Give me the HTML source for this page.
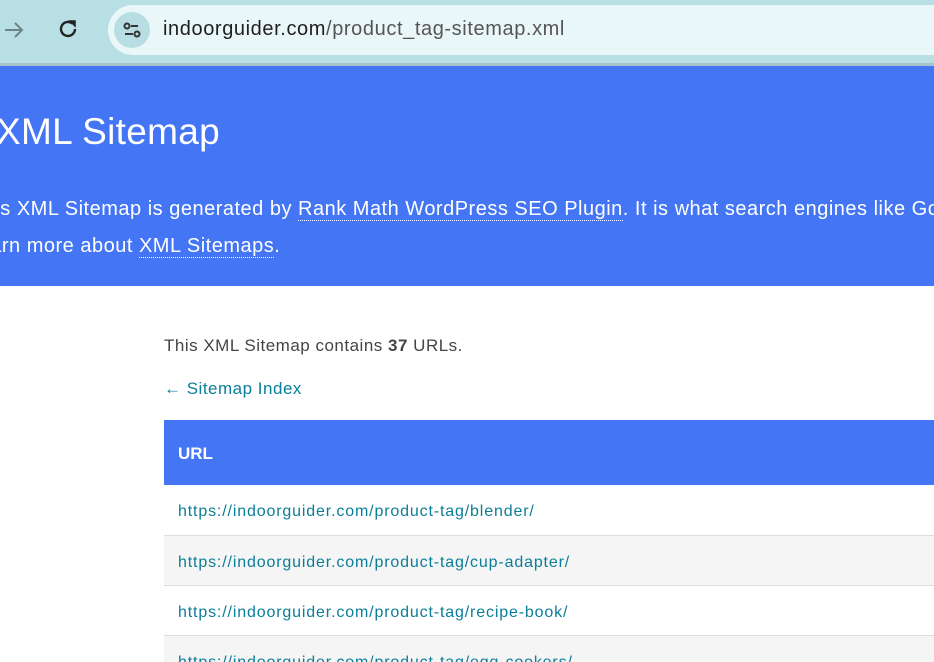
<!DOCTYPE html>
<html><head><meta charset="utf-8"><style>
*{margin:0;padding:0;box-sizing:border-box}
html,body{width:934px;height:662px;overflow:hidden}
body{background:#fff;font-family:"Liberation Sans",sans-serif;position:relative}
.bar{position:absolute;left:0;top:0;width:934px;height:64px;background:#b8e0e4}
.line{position:absolute;left:0;top:63px;width:934px;height:3px;background:#a9c4c8}
.omni{position:absolute;left:108px;top:5px;width:826px;height:50px;border-radius:25px 0 0 25px;background:#eaf7f8}
.tune{position:absolute;left:114px;top:12px;width:36px;height:36px;border-radius:18px;background:#b8dde2}
.url{position:absolute;left:163px;top:18px;font-size:20px;color:#1f1f1f;letter-spacing:0.6px;white-space:nowrap}
.url span{color:#555}
.hdr{position:absolute;left:0;top:66px;width:934px;height:220px;background:#4475f4;color:#fff;overflow:hidden}
.hdr h1{position:absolute;left:-4px;top:45px;font-size:37px;font-weight:normal;white-space:nowrap;letter-spacing:0.3px}
.hdr p{position:absolute;font-size:20px;white-space:nowrap;letter-spacing:0.5px}
.hdr a{color:#fff;text-decoration:none;border-bottom:1px dotted #fff}
.txt{position:absolute;left:164px;top:336px;font-size:17px;color:#444;letter-spacing:0.5px}
.back{position:absolute;left:164px;top:379px;font-size:17px;color:#0a7e98;letter-spacing:0.5px}
table{position:absolute;left:164px;top:420px;width:770px;border-collapse:collapse}
th{background:#4475f4;color:#fff;text-align:left;height:65px;padding-left:14px;font-size:17px;padding-top:2px}
td{height:50px;padding-left:14px;padding-top:5px;font-size:16px;color:#0a7e98;border-bottom:1px solid #ddd;letter-spacing:0.85px;white-space:nowrap}
tr:nth-child(odd) td{background:#f5f5f5}
</style></head><body>
<div class="bar"></div><div class="line"></div>
<svg style="position:absolute;left:2px;top:19px" width="24" height="22" viewBox="0 0 24 22"><path d="M3 11h17M13 4l7 7-7 7" stroke="#6f8386" stroke-width="2" fill="none"/></svg>
<svg style="position:absolute;left:56px;top:17px" width="24" height="24" viewBox="0 0 24 24"><path d="M19 12a7 7 0 1 1-2.5-5.4" stroke="#222" stroke-width="2.4" fill="none"/><path d="M14 4h5v5z" fill="#222" stroke="#222" stroke-width="1.5"/></svg>
<div class="omni"></div>
<div class="tune"><svg width="36" height="36" viewBox="0 0 36 36"><g stroke="#333" stroke-width="2" fill="none"><circle cx="13" cy="14" r="2.5"/><path d="M17 14h7"/><circle cx="23" cy="22" r="2.5"/><path d="M11 22h8"/></g></svg></div>
<div class="url">indoorguider.com<span>/product_tag-sitemap.xml</span></div>
<div class="hdr">
<h1>XML Sitemap</h1>
<p style="left:-29px;top:132px">This XML Sitemap is generated by <a>Rank Math WordPress SEO Plugin</a>. It is what search engines like Google use to crawl</p>
<p style="left:-33px;top:169px">Learn more about <a>XML Sitemaps</a>.</p>
</div>
<div class="txt">This XML Sitemap contains <b>37</b> URLs.</div>
<div class="back">← Sitemap Index</div>
<table>
<tr><th>URL</th></tr>
<tr><td>https://indoorguider.com/product-tag/blender/</td></tr>
<tr><td>https://indoorguider.com/product-tag/cup-adapter/</td></tr>
<tr><td>https://indoorguider.com/product-tag/recipe-book/</td></tr>
<tr><td>https://indoorguider.com/product-tag/egg-cookers/</td></tr>
</table>
</body></html>
